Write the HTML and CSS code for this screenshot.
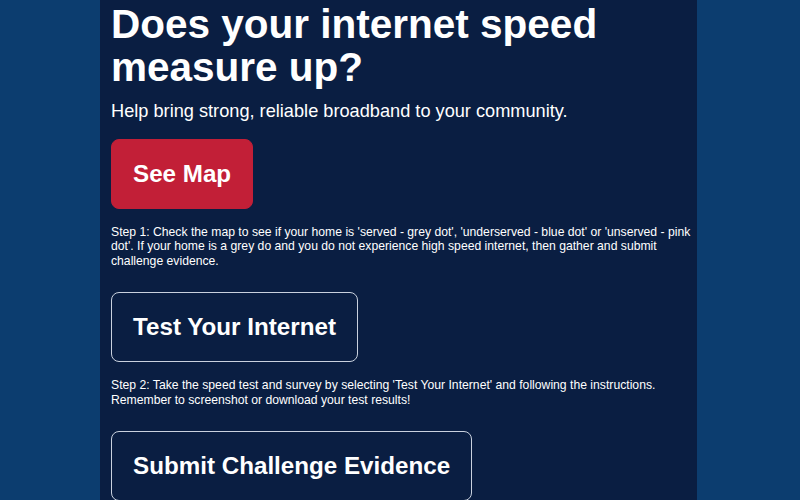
FILE: index.html
```html
<!DOCTYPE html>
<html lang="en">
<head>
<meta charset="utf-8">
<title>Does your internet speed measure up?</title>
<link rel="stylesheet" href="styles.css">
</head>
<body>
<main class="panel">
  <h1 class="title">Does your internet speed measure up?</h1>
  <p class="lead">Help bring strong, reliable broadband to your community.</p>

  <a class="btn btn-red" href="#">See Map</a>
  <p class="step">Step 1: Check the map to see if your home is 'served - grey dot', 'underserved - blue dot' or 'unserved - pink dot'. If your home is a grey do and you do not experience high speed internet, then gather and submit challenge evidence.</p>

  <a class="btn btn-outline" href="#">Test Your Internet</a>
  <p class="step">Step 2: Take the speed test and survey by selecting 'Test Your Internet' and following the instructions. Remember to screenshot or download your test results!</p>

  <a class="btn btn-outline" href="#">Submit Challenge Evidence</a>
</main>
</body>
</html>
```

FILE: styles.css
```css
html, body {
  margin: 0;
  padding: 0;
  height: 100%;
  overflow: hidden;
}

body {
  background: #0c3d6f;
  font-family: "Liberation Sans", Arial, sans-serif;
  color: #ffffff;
}

.panel {
  width: 597px;
  margin-left: 100px;
  min-height: 100%;
  background: #0a1e42;
  padding: 0 5px 0 11px;
  box-sizing: border-box;
  display: flex;
  flex-direction: column;
  align-items: flex-start;
}

.title {
  margin: 0;
  font-size: 40.5px;
  line-height: 43px;
  font-weight: 700;
  padding-top: 3px;
}

.lead {
  margin: 11px 0 0;
  font-size: 18.2px;
  line-height: 22px;
}

.btn {
  display: inline-block;
  box-sizing: border-box;
  height: 70px;
  line-height: 68px;
  padding: 0 21px;
  font-size: 24.2px;
  font-weight: 700;
  color: #ffffff;
  text-decoration: none;
  border-radius: 8px;
  border: 1px solid transparent;
}

.btn-red {
  margin-top: 17px;
  background: #c21f37;
  border-color: #c21f37;
}

.btn-outline {
  background: transparent;
  border-color: #c9d1de;
}

.step {
  margin: 16px 0 24px;
  font-size: 12.2px;
  line-height: 14.4px;
}
```
